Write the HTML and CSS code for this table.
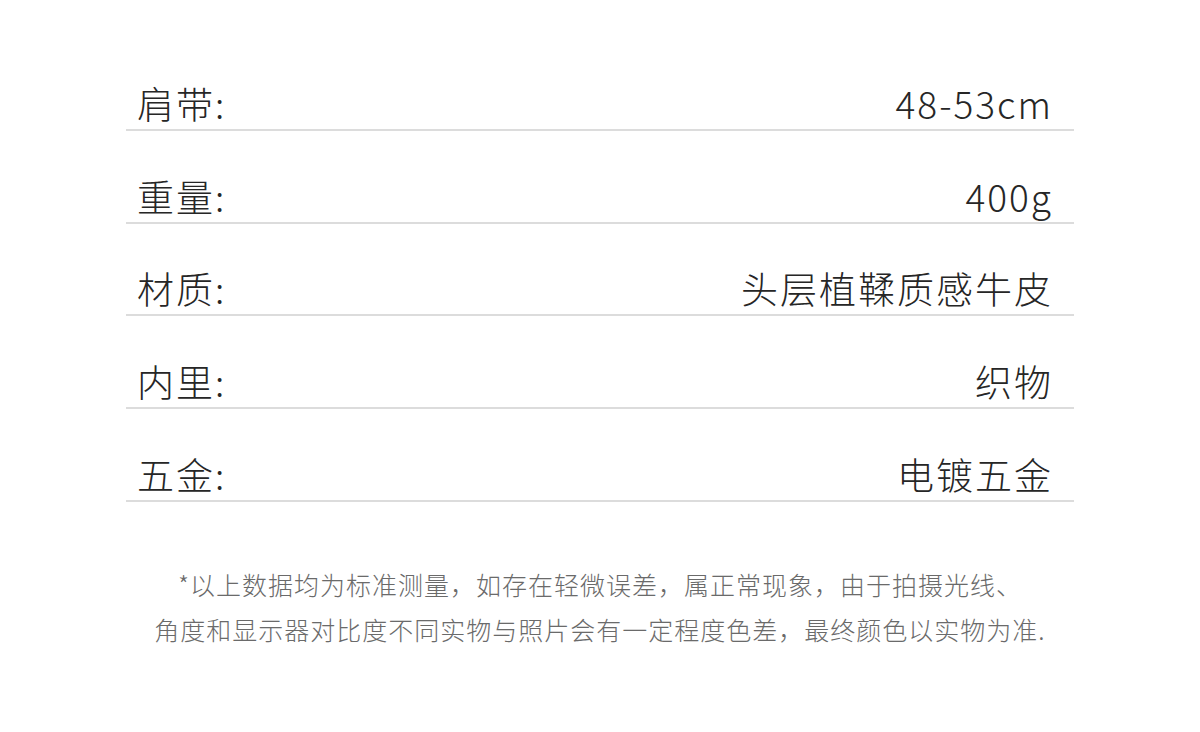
FILE: index.html
```html
<!DOCTYPE html>
<html lang="zh-CN">
<head>
<meta charset="utf-8">
<title>规格参数</title>
<link rel="stylesheet" href="styles.css">
</head>
<body>
<main class="page">
  <section class="specs">
    <div class="row"><span class="label">肩带:</span><span class="value">48-53cm</span></div>
    <div class="row"><span class="label">重量:</span><span class="value">400g</span></div>
    <div class="row"><span class="label">材质:</span><span class="value">头层植鞣质感牛皮</span></div>
    <div class="row"><span class="label">内里:</span><span class="value">织物</span></div>
    <div class="row"><span class="label">五金:</span><span class="value">电镀五金</span></div>
  </section>
  <p class="note">*以上数据均为标准测量，如存在轻微误差，属正常现象，由于拍摄光线、<br>角度和显示器对比度不同实物与照片会有一定程度色差，最终颜色以实物为准.</p>
</main>
</body>
</html>
```
FILE: styles.css
```css
html, body {
  margin: 0;
  padding: 0;
  background: #ffffff;
}

body {
  font-family: "Noto Sans CJK SC", "Noto Sans", sans-serif;
  font-weight: 200;
  color: #262626;
}

.page {
  width: 948px;
  margin: 0 auto;
  padding-top: 38px;
}

.specs {
  display: flex;
  flex-direction: column;
}

.row {
  height: 92.75px;
  box-sizing: border-box;
  display: flex;
  justify-content: space-between;
  align-items: flex-end;
  padding: 0 21px 7px 11px;
  border-bottom: 2px solid #dcdcdc;
  font-size: 37px;
  line-height: 1;
  letter-spacing: 2px;
}

.label,
.value {
  display: block;
}

.note {
  margin: 60px 0 0;
  text-align: center;
  font-size: 25px;
  font-weight: 300;
  line-height: 45px;
  letter-spacing: 1px;
  color: #6a6a6a;
}
```
